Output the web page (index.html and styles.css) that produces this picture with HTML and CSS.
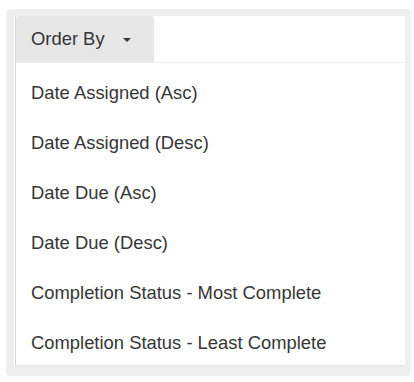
FILE: index.html
```html
<!DOCTYPE html>
<html lang="en">

<head>
  <meta charset="UTF-8">
  <meta name="viewport" content="width=device-width">
  <title>Order By</title>
  <link rel="stylesheet" href="styles.css">
</head>

<body>

  <div class="panel">
    <div class="dropdown">
      <div class="dropdown-inner">
        <button type="button" class="toggle">
          Order By <span class="caret"></span>
        </button>

        <ul class="menu">
          <li><a href="#">Date Assigned (Asc)</a></li>
          <li><a href="#">Date Assigned (Desc)</a></li>
          <li><a href="#">Date Due (Asc)</a></li>
          <li><a href="#">Date Due (Desc)</a></li>
          <li><a href="#">Completion Status - Most Complete</a></li>
          <li><a href="#">Completion Status - Least Complete</a></li>
        </ul>
      </div>
    </div>
  </div>

</body>

</html>
```

FILE: styles.css
```css
* {
  box-sizing: border-box;
  margin: 0;
  padding: 0;
}

body {
  font-family: "Liberation Sans", Arial, sans-serif;
  font-size: 18.4px;
  color: #363636;
  background-color: #ffffff;
  padding: 9px 3px 8px 6px;
}

.panel {
  background-color: #efefef;
  border-radius: 4px;
  padding: 6px 6px 10px 8px;
}

.dropdown {
  background-color: #ffffff;
  padding-left: 1px;
}

.dropdown-inner {
  border-left: 1px solid #d9d9d9;
}

.toggle {
  display: flex;
  align-items: center;
  height: 46px;
  margin-top: 1px;
  padding: 0 23px 0 15px;
  font-family: inherit;
  font-size: 18.4px;
  color: #363636;
  background-color: #e7e7e7;
  border: none;
  border-radius: 3px 3px 0 0;
  cursor: pointer;
}

.caret {
  display: inline-block;
  margin-left: 18px;
  margin-top: 1px;
  border-top: 4px solid #363636;
  border-left: 4px solid transparent;
  border-right: 4px solid transparent;
}

.menu {
  list-style: none;
  border-top: 1px solid #f0f0f0;
  border-bottom: 1px solid #e4e4e4;
  padding-top: 2px;
}

.menu li a {
  display: block;
  padding: 17px 15px 12px;
  line-height: 21px;
  color: #363636;
  text-decoration: none;
}

.menu li a:hover {
  background-color: #f5f5f5;
}
```
